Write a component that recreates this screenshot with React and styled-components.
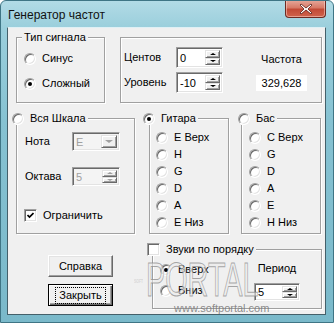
import React from 'react'
import styled, { createGlobalStyle } from 'styled-components'

const GlobalStyle = createGlobalStyle`
  body { margin: 0; background: #fff; }
  * { box-sizing: border-box; }
`

const Window = styled.div`
  position: relative;
  width: 334px;
  height: 323px;
  display: flex;
  flex-direction: column;
  border: 1px solid #3f7585;
  border-radius: 6px 6px 0 0;
  background: linear-gradient(to bottom, #b2dbe6 0px, #9bcfdc 26px, #86c2d2 120px, #7ab9ca 100%);
  font-family: "Liberation Sans", Arial, sans-serif;
  font-size: 11px;
  color: #000;
  overflow: hidden;
`

const TitleBar = styled.div`
  height: 26px;
  display: flex;
  justify-content: space-between;
  align-items: flex-start;
  flex: none;
`

const Title = styled.div`
  margin: 7px 0 0 7px;
  font-size: 12px;
  line-height: 14px;
  color: #111;
`

const CloseButton = styled.div`
  width: 41px;
  height: 18px;
  margin: -1px 7px 0 0;
  display: flex;
  align-items: center;
  justify-content: center;
  border: 1px solid #6e2a22;
  border-top: none;
  border-radius: 0 0 4px 4px;
  background: linear-gradient(to bottom, #e6a99c 0%, #d77a67 45%, #c24a36 55%, #d0634c 100%);
  box-shadow: inset 0 0 0 1px rgba(255, 220, 210, 0.5);
`

const Client = styled.div`
  flex: 1;
  margin: 0 7px 7px 6px;
  background: #f0f0f0;
  border: 1px solid #44606a;
  border-top-color: #dff0f5;
  display: flex;
  flex-direction: column;
`

const Row = styled.div`
  display: flex;
  align-items: flex-start;
  margin-top: ${p => p.$top}px;
`

const GroupBox = styled.div`
  position: relative;
  flex: none;
  margin-left: ${p => p.$left}px;
  width: ${p => p.$w}px;
  height: ${p => p.$h}px;
  border: 1px solid #a0a0a0;
  box-shadow: inset 1px 1px 0 #fff, 1px 1px 0 #fff;
`

const GroupTitle = styled.div`
  position: absolute;
  top: -7px;
  left: ${p => p.$left}px;
  padding: ${p => (p.$text ? '0 2px' : '0 2px 0 0')};
  background: #f0f0f0;
  line-height: 13px;
  display: flex;
  align-items: center;
  gap: 6px;
  white-space: nowrap;
`

const RadioStack = styled.div`
  display: flex;
  flex-direction: column;
  gap: ${p => p.$gap}px;
  padding: ${p => p.$pt}px 0 0 ${p => p.$pl}px;
`

const OptionRow = styled.label`
  display: flex;
  align-items: center;
  gap: 6px;
  height: 13px;
  line-height: 13px;
  white-space: nowrap;
`

const RadioCircle = styled.span`
  flex: none;
  width: 12px;
  height: 12px;
  border-radius: 50%;
  background: #fff;
  border: 1px solid;
  border-color: #a0a0a0 #fff #fff #a0a0a0;
  box-shadow: inset 1px 1px 0 #696969, inset -1px -1px 0 #e3e3e3;
  display: flex;
  align-items: center;
  justify-content: center;
  &::after {
    content: '';
    width: 4px;
    height: 4px;
    border-radius: 50%;
    background: #000;
    display: ${p => (p.$checked ? 'block' : 'none')};
  }
`

const CheckBox = styled.span`
  flex: none;
  width: 13px;
  height: 13px;
  background: #fff;
  border: 1px solid;
  border-color: #a0a0a0 #fff #fff #a0a0a0;
  box-shadow: inset 1px 1px 0 #696969, inset -1px -1px 0 #e3e3e3;
  display: flex;
  align-items: center;
  justify-content: center;
`

const Label = styled.span`
  line-height: 13px;
  white-space: nowrap;
`

const Field = styled.div`
  width: ${p => p.$w}px;
  height: ${p => p.$h}px;
  display: flex;
  align-items: stretch;
  padding: 2px;
  background: ${p => (p.$disabled ? '#f4f4f4' : '#fff')};
  border: 1px solid;
  border-color: #a0a0a0 #fff #fff #a0a0a0;
  box-shadow: inset 1px 1px 0 #696969, inset -1px -1px 0 #e3e3e3;
`

const FieldText = styled.span`
  flex: 1;
  display: flex;
  align-items: center;
  padding-left: 1px;
  color: ${p => (p.$disabled ? '#a0a0a0' : '#000')};
`

const SpinButtons = styled.div`
  width: 15px;
  display: flex;
  flex-direction: column;
`

const RaisedButton = styled.div`
  flex: 1;
  display: flex;
  align-items: center;
  justify-content: center;
  background: #f0f0f0;
  border: 1px solid;
  border-color: #e3e3e3 #696969 #696969 #e3e3e3;
  box-shadow: inset 1px 1px 0 #fff, inset -1px -1px 0 #a0a0a0;
`

const DropButton = styled(RaisedButton)`
  flex: none;
  width: 16px;
`

const Arrow = styled.span`
  width: 0;
  height: 0;
  border-left: ${p => p.$size}px solid transparent;
  border-right: ${p => p.$size}px solid transparent;
  ${p => (p.$up ? 'border-bottom' : 'border-top')}: ${p => p.$size - 1}px solid ${p => (p.$disabled ? '#a0a0a0' : '#000')};
`

const ParamsPanel = styled.div`
  display: flex;
  align-items: flex-start;
`

const ParamsGrid = styled.div`
  display: grid;
  grid-template-columns: 52px 47px;
  row-gap: 4px;
  align-items: center;
  padding: 9px 0 0 3px;
`

const FreqColumn = styled.div`
  width: 51px;
  margin-left: 33px;
  padding-top: 15px;
  display: flex;
  flex-direction: column;
  align-items: center;
`

const FreqValue = styled.div`
  width: 51px;
  height: 16px;
  margin-top: 9px;
  background: #fff;
  display: flex;
  align-items: center;
  justify-content: center;
`

const ScaleGrid = styled.div`
  display: grid;
  grid-template-columns: 47px 48px;
  row-gap: 16px;
  align-items: center;
  padding: 13px 0 0 8px;
`

const CheckRow = styled(OptionRow)`
  margin: 23px 0 0 7px;
`

const ButtonColumn = styled.div`
  margin: 6px 0 0 40px;
  display: flex;
  flex-direction: column;
  gap: 7px;
`

const PushButton = styled.button`
  width: 65px;
  height: 22px;
  padding: 0;
  font: inherit;
  color: #000;
  background: #f0f0f0;
  display: flex;
  align-items: center;
  justify-content: center;
  border: 1px solid;
  border-color: ${p => (p.$default ? '#000' : '#fff #696969 #696969 #fff')};
  box-shadow: ${p =>
    p.$default
      ? 'inset 1px 1px 0 #fff, inset -1px -1px 0 #696969, inset -2px -2px 0 #a0a0a0'
      : 'inset -1px -1px 0 #a0a0a0, inset 1px 1px 0 #e3e3e3'};
`

const FocusText = styled.span`
  padding: 1px 3px;
  line-height: 13px;
  outline: ${p => (p.$focus ? '1px dotted #000' : 'none')};
`

const OrderPanel = styled.div`
  display: flex;
  justify-content: space-between;
  padding-right: 21px;
`

const PeriodColumn = styled.div`
  width: 46px;
  padding-top: 12px;
  display: flex;
  flex-direction: column;
  align-items: center;
  gap: 8px;
`

/* softportal watermark laid over the bottom of the dialog */
const Watermark = styled.div`
  position: absolute;
  left: 133px;
  top: 258px;
  width: 200px;
  display: flex;
  flex-direction: column;
  pointer-events: none;
`

const WatermarkLogo = styled.div`
  height: 42px;
  display: flex;
  align-items: flex-start;
`

const WatermarkWord = styled.span`
  display: inline-block;
  margin-left: 3px;
  font-family: "Liberation Sans", Arial, sans-serif;
  font-size: 48px;
  line-height: 42px;
  transform: scaleX(0.6);
  transform-origin: left center;
  color: rgba(235, 235, 235, 0.6);
  -webkit-text-stroke: 1px rgba(140, 140, 140, 0.75);
`

const WatermarkUrl = styled.span`
  margin: 1px 0 0 40px;
  line-height: 13px;
  font-size: 11px;
  color: rgba(120, 120, 120, 0.85);
`

function Radio({ label, checked }) {
  return (
    <OptionRow>
      <RadioCircle $checked={checked} />
      {label}
    </OptionRow>
  )
}

function CheckMark() {
  return (
    <svg width="7" height="7" viewBox="0 0 7 7">
      <path d="M0.5 3 L2.5 5 L6.5 1" fill="none" stroke="#000" strokeWidth="1.7" />
    </svg>
  )
}

function Check({ checked }) {
  return <CheckBox>{checked && <CheckMark />}</CheckBox>
}

function SpinEdit({ w, h, value, disabled }) {
  return (
    <Field $w={w} $h={h} $disabled={disabled}>
      <FieldText $disabled={disabled}>{value}</FieldText>
      <SpinButtons>
        <RaisedButton><Arrow $up $size={3} $disabled={disabled} /></RaisedButton>
        <RaisedButton><Arrow $size={3} $disabled={disabled} /></RaisedButton>
      </SpinButtons>
    </Field>
  )
}

function Combo({ value }) {
  return (
    <Field $w={48} $h={19} $disabled>
      <FieldText $disabled>{value}</FieldText>
      <DropButton><Arrow $size={4} $disabled /></DropButton>
    </Field>
  )
}

function CloseGlyph() {
  return (
    <svg width="14" height="12" viewBox="0 0 14 12">
      <path d="M2 1 L7 5 L12 1 L13 2 L9 6 L13 10 L12 11 L7 7 L2 11 L1 10 L5 6 L1 2 Z" fill="#fff" stroke="#5a1c14" strokeWidth="0.8" />
    </svg>
  )
}

function WatermarkDots() {
  return (
    <svg width="72" height="42" viewBox="0 0 72 42">
      <defs>
        <pattern id="wm-dots" width="2" height="2" patternUnits="userSpaceOnUse">
          <rect width="1" height="1" fill="rgba(110,110,110,0.75)" />
        </pattern>
      </defs>
      <text
        x="0"
        y="41"
        fontFamily="Liberation Sans, Arial, sans-serif"
        fontSize="38"
        fontWeight="bold"
        textLength="70"
        lengthAdjust="spacingAndGlyphs"
        fill="url(#wm-dots)"
      >
        SOFT
      </text>
    </svg>
  )
}

export default function App() {
  return (
    <>
      <GlobalStyle />
      <Window>
        <TitleBar>
          <Title>Генератор частот</Title>
          <CloseButton><CloseGlyph /></CloseButton>
        </TitleBar>
        <Client>
          <Row $top={9}>
            <GroupBox $left={8} $w={89} $h={66}>
              <GroupTitle $left={5} $text>Тип сигнала</GroupTitle>
              <RadioStack $pt={14} $pl={7} $gap={12}>
                <Radio label="Синус" />
                <Radio label="Сложный" checked />
              </RadioStack>
            </GroupBox>
            <GroupBox $left={15} $w={202} $h={66}>
              <ParamsPanel>
                <ParamsGrid>
                  <Label>Центов</Label>
                  <SpinEdit w={47} h={21} value="0" />
                  <Label>Уровень</Label>
                  <SpinEdit w={47} h={21} value="-10" />
                </ParamsGrid>
                <FreqColumn>
                  <Label>Частота</Label>
                  <FreqValue>329,628</FreqValue>
                </FreqColumn>
              </ParamsPanel>
            </GroupBox>
          </Row>

          <Row $top={15}>
            <GroupBox $left={8} $w={119} $h={116}>
              <GroupTitle $left={-5}><Radio label="Вся Шкала" /></GroupTitle>
              <ScaleGrid>
                <Label>Нота</Label>
                <Combo value="E" />
                <Label>Октава</Label>
                <SpinEdit w={48} h={19} value="5" disabled />
              </ScaleGrid>
              <CheckRow>
                <Check checked />
                Ограничить
              </CheckRow>
            </GroupBox>
            <GroupBox $left={14} $w={80} $h={116}>
              <GroupTitle $left={-7}><Radio label="Гитара" checked /></GroupTitle>
              <RadioStack $pt={12} $pl={6} $gap={4}>
                {['E Верх', 'H', 'G', 'D', 'A', 'E Низ'].map(s => <Radio key={s} label={s} />)}
              </RadioStack>
            </GroupBox>
            <GroupBox $left={12} $w={80} $h={116}>
              <GroupTitle $left={-4}><Radio label="Бас" /></GroupTitle>
              <RadioStack $pt={12} $pl={7} $gap={4}>
                {['C Верх', 'G', 'D', 'A', 'E', 'H Низ'].map(s => <Radio key={s} label={s} />)}
              </RadioStack>
            </GroupBox>
          </Row>

          <Row $top={15}>
            <ButtonColumn>
              <PushButton><FocusText>Справка</FocusText></PushButton>
              <PushButton $default><FocusText $focus>Закрыть</FocusText></PushButton>
            </ButtonColumn>
            <GroupBox $left={39} $w={170} $h={60}>
              <GroupTitle $left={-6}>
                <Check />
                Звуки по порядку
              </GroupTitle>
              <OrderPanel>
                <RadioStack $pt={13} $pl={7} $gap={8}>
                  <Radio label="Вверх" checked />
                  <Radio label="Вниз" />
                </RadioStack>
                <PeriodColumn>
                  <Label>Период</Label>
                  <SpinEdit w={46} h={18} value="5" />
                </PeriodColumn>
              </OrderPanel>
            </GroupBox>
          </Row>
        </Client>
        <Watermark>
          <WatermarkLogo>
            <WatermarkDots />
            <WatermarkWord>PORTAL</WatermarkWord>
          </WatermarkLogo>
          <WatermarkUrl>www.softportal.com</WatermarkUrl>
        </Watermark>
      </Window>
    </>
  )
}
